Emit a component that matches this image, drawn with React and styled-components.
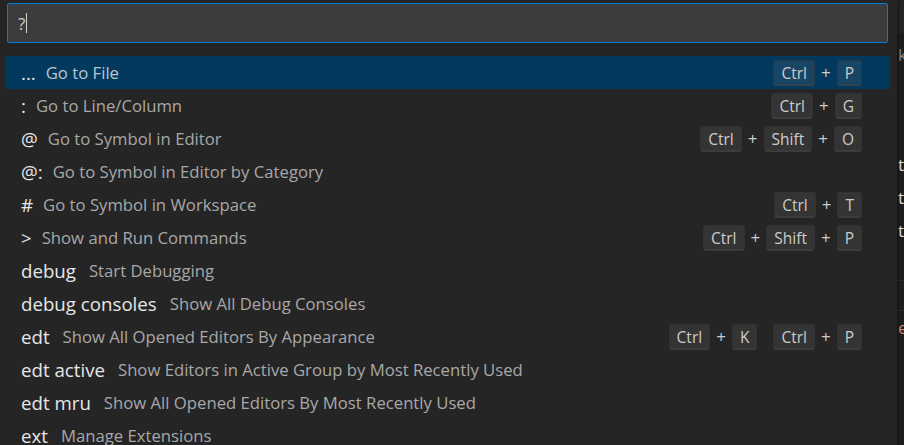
import React from "react";
import styled, { createGlobalStyle } from "styled-components";

const items = [
  { prefix: "...", label: "Go to File", keys: [["Ctrl", "P"]], selected: true },
  { prefix: ":", label: "Go to Line/Column", keys: [["Ctrl", "G"]] },
  { prefix: "@", label: "Go to Symbol in Editor", keys: [["Ctrl", "Shift", "O"]] },
  { prefix: "@:", label: "Go to Symbol in Editor by Category" },
  { prefix: "#", label: "Go to Symbol in Workspace", keys: [["Ctrl", "T"]] },
  { prefix: ">", label: "Show and Run Commands", keys: [["Ctrl", "Shift", "P"]] },
  { prefix: "debug", label: "Start Debugging" },
  { prefix: "debug consoles", label: "Show All Debug Consoles" },
  {
    prefix: "edt",
    label: "Show All Opened Editors By Appearance",
    keys: [
      ["Ctrl", "K"],
      ["Ctrl", "P"],
    ],
  },
  { prefix: "edt active", label: "Show Editors in Active Group by Most Recently Used" },
  { prefix: "edt mru", label: "Show All Opened Editors By Most Recently Used" },
  { prefix: "ext", label: "Manage Extensions" },
];

export default function App() {
  return (
    <>
      <GlobalStyle />
      <Screen>
        <Panel>
          <InputBox>
            <InputText>?</InputText>
            <Caret />
          </InputBox>
          <List>
            {items.map((item) => (
              <Row key={item.prefix} selected={item.selected}>
                <Prefix word={/\w/.test(item.prefix)}>{item.prefix}</Prefix>
                <Label selected={item.selected}>{item.label}</Label>
                {item.keys && (
                  <Keys>
                    {item.keys.map((chord, i) => (
                      <Chord key={i}>
                        {chord.map((k, j) => (
                          <React.Fragment key={k + j}>
                            {j > 0 && <Plus>+</Plus>}
                            <Key>{k}</Key>
                          </React.Fragment>
                        ))}
                      </Chord>
                    ))}
                  </Keys>
                )}
              </Row>
            ))}
          </List>
        </Panel>
        <Editor>
          <TabStrip />
          <PeekLine h={44} color="#8b8b8b">k</PeekLine>
          <PeekLine h={71} />
          <PeekLine h={33} color="#e8e8e8">t</PeekLine>
          <PeekLine h={33} color="#e8e8e8">t</PeekLine>
          <PeekLine h={33} color="#e8e8e8">t</PeekLine>
          <PeekLine h={33} />
          <Rule />
          <PeekLine h={29} />
          <Rule />
          <PeekLine h={33} color="#ce9178">e</PeekLine>
        </Editor>
      </Screen>
    </>
  );
}

const GlobalStyle = createGlobalStyle`
  html, body {
    margin: 0;
    padding: 0;
    background: #1e1e1e;
  }
  body {
    font-family: "Open Sans", "Noto Sans", sans-serif;
    overflow: hidden;
  }
`;

const Screen = styled.div`
  display: flex;
  width: 904px;
  height: 445px;
  overflow: hidden;
`;

const Panel = styled.div`
  width: 897px;
  flex-shrink: 0;
  background: #252526;
  box-shadow: 1px 0 4px rgba(0, 0, 0, 0.5);
  padding: 3px 0 0 0;
  position: relative;
  z-index: 1;
`;

const InputBox = styled.div`
  margin-left: 7px;
  width: 881px;
  height: 40px;
  box-sizing: border-box;
  background: #3c3c3c;
  border: 1px solid #007fd4;
  border-radius: 2px;
  display: flex;
  align-items: center;
  padding-left: 10px;
`;

const InputText = styled.span`
  color: #cccccc;
  font-size: 17px;
`;

const Caret = styled.span`
  width: 1px;
  height: 20px;
  background: #d4d4d4;
  margin-left: 1px;
`;

const List = styled.div`
  margin-top: 13px;
  padding: 0 7px 0 5px;
  display: flex;
  flex-direction: column;
`;

const Row = styled.div`
  height: 33px;
  display: flex;
  align-items: center;
  padding: 0 28px 0 16px;
  border-radius: 3px;
  background: ${(p) => (p.selected ? "#04395e" : "transparent")};
  white-space: nowrap;
`;

const Prefix = styled.span`
  color: #e6e6e6;
  font-size: 18.7px;
  margin-right: ${(p) => (p.word ? 13 : 10)}px;
`;

const Label = styled.span`
  color: ${(p) => (p.selected ? "#b8c6d2" : "#a8a8a8")};
  font-size: 16.7px;
  flex: 1;
`;

const Keys = styled.div`
  display: flex;
  gap: 16px;
`;

const Chord = styled.div`
  display: flex;
  align-items: center;
`;

const Key = styled.span`
  display: inline-flex;
  align-items: center;
  height: 26px;
  box-sizing: border-box;
  padding: 0 7px;
  font-size: 15.5px;
  color: #cccccc;
  background: rgba(128, 128, 128, 0.17);
  border: 1px solid rgba(51, 51, 51, 0.6);
  border-bottom-color: rgba(68, 68, 68, 0.6);
  box-shadow: inset 0 -1px 0 rgba(68, 68, 68, 0.6);
  border-radius: 3px;
`;

const Plus = styled.span`
  color: #cccccc;
  font-size: 17px;
  margin: 0 6px;
`;

const Editor = styled.div`
  flex: 1;
  display: flex;
  flex-direction: column;
  background: #1e1e1e;
  overflow: hidden;
`;

const TabStrip = styled.div`
  height: 33px;
  background: #252526;
  flex-shrink: 0;
`;

const PeekLine = styled.div`
  height: ${(p) => p.h}px;
  line-height: ${(p) => p.h}px;
  flex-shrink: 0;
  color: ${(p) => p.color || "transparent"};
  font-size: 17px;
  padding-left: 1px;
`;

const Rule = styled.div`
  height: 1px;
  background: #2e2e2e;
  flex-shrink: 0;
`;
